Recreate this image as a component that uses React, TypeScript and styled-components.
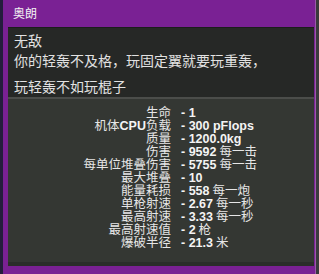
import styled, { createGlobalStyle } from 'styled-components'

const GlobalStyle = createGlobalStyle`
  html, body {
    margin: 0;
    padding: 0;
    background: linear-gradient(to right, #241d3c 0 3px, #393a3c 3px);
    overflow: hidden;
  }
`

const stats = [
  { label: '生命', value: '- 1' },
  { label: ['机体', 'CPU', '负载'], value: '- 300 pFlops' },
  { label: '质量', value: '- 1200.0kg' },
  { label: '伤害', value: '- 9592', unit: '每一击' },
  { label: '每单位堆叠伤害', value: '- 5755', unit: '每一击' },
  { label: '最大堆叠', value: '- 10' },
  { label: '能量耗损', value: '- 558', unit: '每一炮' },
  { label: '单枪射速', value: '- 2.67', unit: '每一秒' },
  { label: '最高射速', value: '- 3.33', unit: '每一秒' },
  { label: '最高射速值', value: '- 2', unit: '枪' },
  { label: '爆破半径', value: '- 21.3', unit: '米' },
]

export default function App() {
  return (
    <>
      <GlobalStyle />
      <Window>
        <TitleBar>奥朗</TitleBar>
        <Panel>
          <Description>
            <Name>无敌</Name>
            <Line>你的轻轰不及格，玩固定翼就要玩重轰，</Line>
            <Line $gap>玩轻轰不如玩棍子</Line>
          </Description>
          <Stats>
            {stats.map((s, i) => (
              <Row key={i}>
                <Label>
                  {Array.isArray(s.label) ? (
                    <>
                      {s.label[0]}
                      <Bold>{s.label[1]}</Bold>
                      {s.label[2]}
                    </>
                  ) : (
                    s.label
                  )}
                </Label>
                <Value>
                  <Bold>{s.value}</Bold>
                  {s.unit && <Unit>{s.unit}</Unit>}
                </Value>
              </Row>
            ))}
          </Stats>
          <Footer />
        </Panel>
      </Window>
    </>
  )
}

const Window = styled.div`
  margin-left: 3px;
  width: 313px;
  height: 274px;
  box-sizing: border-box;
  background: #7a2194;
  border-right: 1px solid #9a5aa8;
  padding: 0 1px 8px 5px;
  display: flex;
  flex-direction: column;
  font-family: 'Noto Sans CJK SC', sans-serif;
`

const TitleBar = styled.div`
  height: 27px;
  line-height: 26px;
  padding-left: 5px;
  font-size: 12px;
  color: #f2f2f2;
`

const Panel = styled.div`
  flex: 1;
  display: flex;
  flex-direction: column;
  background: #343733;
`

const Description = styled.div`
  background: #262826;
  border-top: 1px solid #1c1d1c;
  border-bottom: 2px solid #4b4d4a;
  padding: 2px 0 6px 6px;
  height: 61px;
  color: #e2e2e2;
  font-size: 14px;
`

const Name = styled.div`
  line-height: 20px;
`

const Line = styled.div<{ $gap?: boolean }>`
  line-height: 20px;
  margin-top: ${p => (p.$gap ? '6px' : '0')};
  white-space: nowrap;
`

const Stats = styled.div`
  flex: 1;
  padding-top: 6px;
  display: grid;
  grid-template-columns: 163px 1fr;
  grid-auto-rows: 13px;
  column-gap: 10px;
  align-content: start;
  color: #e6e6e6;
  font-size: 12.5px;
`

const Row = styled.div`
  display: contents;
`

const Label = styled.div`
  text-align: right;
  line-height: 13px;
  white-space: nowrap;
`

const Value = styled.div`
  line-height: 13px;
  white-space: nowrap;
`

const Bold = styled.span`
  font-family: 'Liberation Sans', sans-serif;
  font-weight: 700;
  font-size: 12.5px;
  line-height: 13px;
  color: #f4f4f4;
`

const Unit = styled.span`
  margin-left: 3px;
`

const Footer = styled.div`
  height: 4px;
  background: #2b2d2a;
`
